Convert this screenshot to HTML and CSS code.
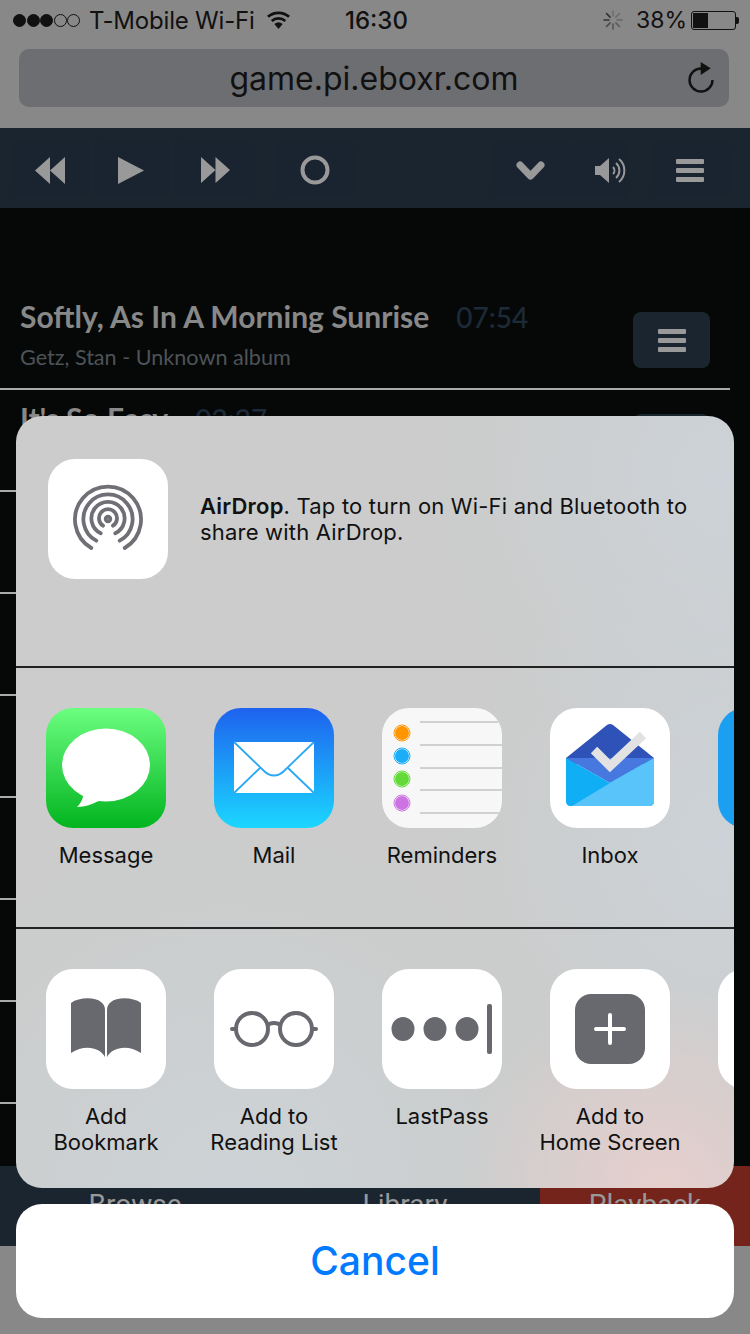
FILE: index.html
```html
<!DOCTYPE html>
<html lang="en">
<head>
    <meta charset="UTF-8">
    <title>game.pi.eboxr.com</title>
    <link rel="stylesheet" href="styles.css">
</head>
<body>
    <div class="page">
        <div class="status">
            <div class="signal">
                <span class="dot on"></span><span class="dot on"></span><span class="dot on"></span><span class="dot"></span><span class="dot"></span>
            </div>
            <span class="carrier">T-Mobile Wi-Fi</span>
            <svg class="wifi" viewBox="0 0 27 18"><path d="M13.500 18l-4.200-5a6.500 6.500 0 0 1 8.400 0z" /><path d="M7.600 11a9.200 9.200 0 0 1 11.800 0l1.800-2.100a12 12 0 0 0-15.400 0z" /><path d="M3.900 6.800a14.700 14.700 0 0 1 19.200 0L25 4.700a17.500 17.500 0 0 0-23 0z" /></svg>
            <span class="time">16:30</span>
            <svg class="spinner" viewBox="0 0 20 20"><g stroke="#333" stroke-width="1.6" stroke-linecap="round"><path d="M10 1v5" opacity=".3" /><path d="M16.400 3.600l-3.500 3.500" opacity=".3" /><path d="M19 10h-5" opacity=".4" /><path d="M16.400 16.400l-3.500-3.500" opacity=".5" /><path d="M10 19v-5" opacity=".6" /><path d="M3.600 16.400l3.500-3.500" opacity=".7" /><path d="M1 10h5" /><path d="M3.600 3.600l3.500 3.500" /></g></svg>
            <span class="percent">38%</span>
            <div class="battery"><div class="charge"></div></div>
            <div class="nub"></div>
        </div>

        <div class="browser">
            <div class="urlbar">
                <span class="url">game.pi.eboxr.com</span>
                <svg class="reload" viewBox="0 0 28 32"><path d="M14 6.500A11.500 11.500 0 1 0 25.500 18" fill="none" stroke="#111" stroke-width="2.400" /><path d="M13.700 0l10 6.300-10 6.700z" fill="#111" /></svg>
            </div>
        </div>

        <div class="toolbar">
            <div class="tool w80"><svg viewBox="0 0 30 27" class="ico30"><path d="M15 0v27L0 13.500zM30 0v27L15 13.500z" /></svg></div>
            <div class="tool w75 play"><svg viewBox="0 0 26 27" class="ico26"><path d="M0 0l26 13.500L0 27z" /></svg></div>
            <div class="tool w80"><svg viewBox="0 0 30 27" class="ico29"><path d="M0 0l15 13.500L0 27zM15 0l15 13.500L15 27z" /></svg></div>
            <div class="tool w78 gap-left"><svg viewBox="0 0 30 30" class="ico30"><circle cx="15" cy="15" r="12.500" fill="none" stroke="#999" stroke-width="4" /></svg></div>
            <div class="tool w80 push"><svg viewBox="0 0 29 19" class="ico29"><path d="M4 4l10.500 11L25 4" fill="none" stroke="#999" stroke-width="7" stroke-linecap="round" stroke-linejoin="round" /></svg></div>
            <div class="tool w60 speaker"><svg viewBox="0 0 33 27" class="ico33"><path d="M1 9h5l9-8v25l-9-8H1z" /><g fill="none" stroke="#999" stroke-width="2"><path d="M19 10a5 5 0 0 1 0 7" /><path d="M22 6a10 10 0 0 1 0 15" /><path d="M25 2a15 15 0 0 1 0 23" /></g></svg></div>
            <div class="tool w80 gap-menu"><div class="bars"><i></i><i></i><i></i></div></div>
        </div>

        <div class="tracks">
            <div class="track">
                <div class="track-info">
                    <div class="track-line"><span class="title">Softly, As In A Morning Sunrise</span><span class="length">07:54</span></div>
                    <div class="artist">Getz, Stan - Unknown album</div>
                </div>
                <div class="track-btn"><div class="bars"><i></i><i></i><i></i></div></div>
            </div>
            <div class="track">
                <div class="track-info">
                    <div class="track-line"><span class="title">It's So Easy</span><span class="length">02:27</span></div>
                </div>
                <div class="track-btn"></div>
            </div>
            <div class="track"></div>
            <div class="track"></div>
            <div class="track"></div>
            <div class="track"></div>
            <div class="track"></div>
            <div class="track"></div>
        </div>

        <div class="tabs">
            <div class="tab browse">Browse</div>
            <div class="tab library">Library</div>
            <div class="tab playback">Playback</div>
        </div>
        <div class="safari-bottom"></div>
    </div>

    <div class="overlay">
        <div class="sheet">
            <div class="airdrop">
                <div class="icon">
                    <svg viewBox="0 0 120 120" fill="none" stroke="#6f6f76" stroke-width="3.800" stroke-linecap="round">
                        <path d="M43.300 89A33 33 0 1 1 76.700 89" />
                        <path d="M48.300 81.700A24.600 24.600 0 1 1 71.700 81.700" />
                        <path d="M52.700 74.300A16.600 16.600 0 1 1 67.300 74.300" />
                        <path d="M55 66.700A9 9 0 1 1 65 66.700" />
                        <circle cx="60" cy="60" r="2.300" />
                    </svg>
                </div>
                <p class="airdrop-text"><b>AirDrop</b>. Tap to turn on Wi-Fi and Bluetooth to share with AirDrop.</p>
            </div>

            <div class="row apps">
                <div class="item">
                    <div class="icon message">
                        <svg viewBox="0 0 120 120" fill="#fff"><ellipse cx="60" cy="57" rx="44" ry="36.500" /><path d="M37 84c1 6-2 11-6 15 8 0 15-3 22-6z" /></svg>
                    </div>
                    <div class="label">Message</div>
                </div>
                <div class="item">
                    <div class="icon mail">
                        <svg viewBox="0 0 120 120"><rect x="20" y="34" width="80" height="51" fill="#fff" /><g fill="none" stroke="#2aa8f5" stroke-width="1.800"><path d="M20 34l30 29c6 6 14 6 20 0l30-29" /><path d="M20 85l26-25" /><path d="M100 85L74 60" /></g></svg>
                    </div>
                    <div class="label">Mail</div>
                </div>
                <div class="item">
                    <div class="icon reminders">
                        <svg viewBox="0 0 120 120">
                            <g stroke="#aaa" stroke-width="1"><path d="M38 14h78" /><path d="M38 37h82" /><path d="M38 60h82" /><path d="M38 82h82" /><path d="M38 105h82" /></g>
                            <g stroke-width="1"><circle cx="20" cy="25" r="7" fill="#ff9500" /><circle cx="20" cy="25" r="8" fill="none" stroke="#ff9500" /></g>
                            <g stroke-width="1"><circle cx="20" cy="48" r="7" fill="#1badf8" /><circle cx="20" cy="48" r="8" fill="none" stroke="#1badf8" /></g>
                            <g stroke-width="1"><circle cx="20" cy="71" r="7" fill="#63da38" /><circle cx="20" cy="71" r="8" fill="none" stroke="#63da38" /></g>
                            <g stroke-width="1"><circle cx="20" cy="95" r="7" fill="#cc73e1" /><circle cx="20" cy="95" r="8" fill="none" stroke="#cc73e1" /></g>
                        </svg>
                    </div>
                    <div class="label">Reminders</div>
                </div>
                <div class="item">
                    <div class="icon">
                        <svg viewBox="0 0 120 120">
                            <path d="M16 50L57 17c2-1.500 4-1.500 6 0l41 33v6H16z" fill="#2f52b8" />
                            <path d="M16 50h88L60 75z" fill="#4678e0" />
                            <path d="M16 50l44 25 44-25v44c0 2-2 4-4 4H20c-2 0-4-2-4-4z" fill="#10aef5" />
                            <path d="M104 50v44c0 2-2 4-4 4H22l38-23z" fill="#58c4fa" />
                            <path d="M44 42l16 16 33-31" fill="none" stroke="#e2e2e2" stroke-width="9" />
                        </svg>
                    </div>
                    <div class="label">Inbox</div>
                </div>
                <div class="item">
                    <div class="icon twitter"></div>
                </div>
            </div>

            <div class="row actions">
                <div class="item">
                    <div class="icon">
                        <svg viewBox="0 0 120 120" fill="#68686f">
                            <path d="M25 34c8-6 24-6 30-1 3 2 4 5 4 8v47c-5-10-21-13-34-4z" />
                            <path d="M95 34c-8-6-24-6-30-1-3 2-4 5-4 8v47c5-10 21-13 34-4z" />
                        </svg>
                    </div>
                    <div class="label">Add<br>Bookmark</div>
                </div>
                <div class="item">
                    <div class="icon">
                        <svg viewBox="0 0 120 120" fill="none" stroke="#68686f" stroke-width="4">
                            <circle cx="38" cy="60" r="16" />
                            <circle cx="82" cy="60" r="16" />
                            <path d="M53 57c3-4 11-4 14 0" />
                            <path d="M18 60h4" stroke-linecap="round" />
                            <path d="M98 60h4" stroke-linecap="round" />
                        </svg>
                    </div>
                    <div class="label">Add to<br>Reading List</div>
                </div>
                <div class="item">
                    <div class="icon">
                        <svg viewBox="0 0 120 120" fill="#68686f">
                            <ellipse cx="21" cy="60" rx="11.500" ry="12" />
                            <ellipse cx="53" cy="60" rx="11.500" ry="12" />
                            <ellipse cx="85" cy="60" rx="11.500" ry="12" />
                            <rect x="105" y="35" width="5" height="50" rx="2" />
                        </svg>
                    </div>
                    <div class="label">LastPass</div>
                </div>
                <div class="item">
                    <div class="icon">
                        <svg viewBox="0 0 120 120">
                            <rect x="25" y="25" width="70" height="70" rx="16" fill="#68686f" />
                            <path d="M46 60h28M60 46v28" stroke="#fff" stroke-width="4" stroke-linecap="round" />
                        </svg>
                    </div>
                    <div class="label">Add to<br>Home Screen</div>
                </div>
                <div class="item">
                    <div class="icon"></div>
                </div>
            </div>
        </div>
        <div class="cancel">Cancel</div>
    </div>
</body>
</html>
```

FILE: styles.css
```css
body {
    margin: 0;
    width: 750px;
    height: 1334px;
    overflow: hidden;
    position: relative;
    background-color: #888;
    font-family: Inter, 'Liberation Sans', sans-serif;
    color: #111;
}

svg {
    display: block;
}

/* status bar */
.status {
    height: 40px;
    display: flex;
    align-items: center;
    background-color: #888;
    font-size: 24px;
}

.signal {
    display: flex;
    gap: 0.6px;
    margin-left: 13px;
    width: 76px;
}

.dot {
    width: 11px;
    height: 11px;
    border: 1px solid #111;
    border-radius: 50%;
}

.dot.on {
    background-color: #111;
}

.carrier {
    width: 176px;
    letter-spacing: -0.2px;
}

.wifi {
    width: 27px;
    height: 18px;
    fill: #111;
}

.time {
    margin-left: 53px;
    width: 258px;
    font-weight: 500;
}

.spinner {
    width: 20px;
    height: 20px;
}

.percent {
    margin-left: 13px;
    width: 55px;
    font-size: 23px;
}

.battery {
    width: 41px;
    height: 15px;
    border: 1px solid #111;
    border-radius: 3px;
    padding: 1px;
    display: flex;
}

.charge {
    width: 15px;
    background-color: #111;
}

.nub {
    width: 3px;
    height: 7px;
    background-color: #111;
    border-radius: 0 2px 2px 0;
}

/* url bar */
.browser {
    height: 88px;
    background-color: #888;
    padding: 9px 21px 21px 19px;
    box-sizing: border-box;
}

.urlbar {
    height: 58px;
    background-color: #6d6e71;
    border-radius: 10px;
    display: flex;
    align-items: center;
    justify-content: center;
    position: relative;
}

.url {
    font-size: 32px;
}

.reload {
    position: absolute;
    right: 14px;
    top: 13px;
    width: 28px;
    height: 32px;
}

/* player toolbar */
.toolbar {
    height: 80px;
    background-color: #1b2530;
    display: flex;
    align-items: center;
    padding: 4px 20px 0 10px;
    box-sizing: border-box;
    gap: 5px;
}

.tool {
    height: 56px;
    background-color: #1a2430;
    border-radius: 8px;
    display: flex;
    align-items: center;
    justify-content: center;
    fill: #999;
}

.w80 { width: 80px; }
.w75 { width: 75px; }
.w78 { width: 78px; }
.w60 { width: 60px; }
.gap-left { margin-left: 16px; }
.push { margin-left: auto; margin-right: -5px; }
.gap-menu { margin-left: 15px; }
.play { padding-right: 3px; box-sizing: border-box; }
.speaker { padding-left: 20px; box-sizing: border-box; }
.ico30 { width: 30px; }
.ico29 { width: 29px; }
.ico26 { width: 26px; }
.ico33 { width: 33px; flex: none; }

.bars {
    display: flex;
    flex-direction: column;
    gap: 4px;
    width: 28px;
}

.bars i {
    display: block;
    height: 5px;
    background-color: #999;
    border-radius: 1px;
}

/* track list */
.tracks {
    height: 958px;
    background-color: #060808;
    padding: 80px 20px 0 0;
    box-sizing: border-box;
    overflow: hidden;
}

.track {
    height: 102px;
    border-bottom: 2px solid #aaa;
    box-sizing: border-box;
    padding: 10px 20px 0 20px;
    display: flex;
    justify-content: space-between;
    font-family: Lato, 'Liberation Sans', sans-serif;
}

.track-line {
    display: flex;
    align-items: baseline;
    gap: 27px;
    height: 40px;
}

.title {
    font-size: 30px;
    font-weight: 700;
    color: #888;
}

.length {
    font-size: 28px;
    font-weight: 500;
    color: #1d2a38;
}

.artist {
    font-size: 21.600px;
    color: #4d5357;
    margin-top: 6px;
}

.track-btn {
    width: 77px;
    height: 56px;
    margin-top: 14px;
    background-color: #1b2530;
    border-radius: 8px;
    display: flex;
    align-items: center;
    justify-content: center;
}

/* bottom tabs */
.tabs {
    height: 80px;
    display: flex;
    font-family: Roboto, sans-serif;
    font-size: 28px;
    color: #999;
}

.tab {
    text-align: center;
    padding-top: 22px;
    box-sizing: border-box;
}

.browse, .library {
    width: 270px;
    background-color: #1b2530;
}

.playback {
    width: 210px;
    background-color: #74241b;
}

.safari-bottom {
    height: 88px;
    background-color: #888;
}

/* share sheet, lies over the page */
.overlay {
    position: absolute;
    left: 16px;
    right: 16px;
    bottom: 16px;
    display: flex;
    flex-direction: column;
    gap: 16px;
}

.sheet {
    height: 772px;
    border-radius: 26px;
    overflow: hidden;
    background:
        radial-gradient(circle at 90% 100%, rgba(232, 208, 206, 0.95), rgba(232, 208, 206, 0) 20%),
        radial-gradient(circle at 100% 8%, rgba(205, 211, 217, 0.9), rgba(205, 211, 217, 0) 30%),
        radial-gradient(circle at 100% 55%, rgba(205, 211, 217, 0.9), rgba(205, 211, 217, 0) 35%),
        radial-gradient(circle at 30% 100%, rgba(205, 211, 215, 0.9), rgba(205, 211, 215, 0) 40%),
        #cbcccb;
}

.airdrop {
    height: 252px;
    padding: 43px 32px 0;
    box-sizing: border-box;
    display: flex;
    gap: 32px;
    border-bottom: 2px solid #222;
}

.airdrop-text {
    margin: 34px 0 0;
    width: 500px;
    font-size: 22px;
    line-height: 26px;
    letter-spacing: 0.2px;
    color: #111;
}

.airdrop-text b {
    font-weight: 600;
}

.icon {
    width: 120px;
    height: 120px;
    flex: none;
    background-color: #fff;
    border-radius: 27px;
    overflow: hidden;
}

.message {
    background: linear-gradient(#6cfe80, #02b41f);
}

.mail {
    background: linear-gradient(#1e62ee, #1bd7ff);
}

.reminders {
    background-color: #f7f7f7;
}

.twitter {
    background-color: #1b9ff1;
}

.row {
    display: flex;
    gap: 48px;
    padding: 40px 0 0 30px;
    box-sizing: border-box;
}

.apps {
    height: 261px;
    border-bottom: 2px solid #222;
}

.actions {
    height: 259px;
}

.item {
    width: 120px;
    flex: none;
}

.label {
    width: 160px;
    margin: 14px 0 0 -20px;
    text-align: center;
    font-size: 22px;
    line-height: 26px;
    color: #111;
}

.cancel {
    height: 114px;
    line-height: 114px;
    background-color: #fff;
    border-radius: 26px;
    text-align: center;
    font-size: 39px;
    font-weight: 500;
    color: #007aff;
}
```
